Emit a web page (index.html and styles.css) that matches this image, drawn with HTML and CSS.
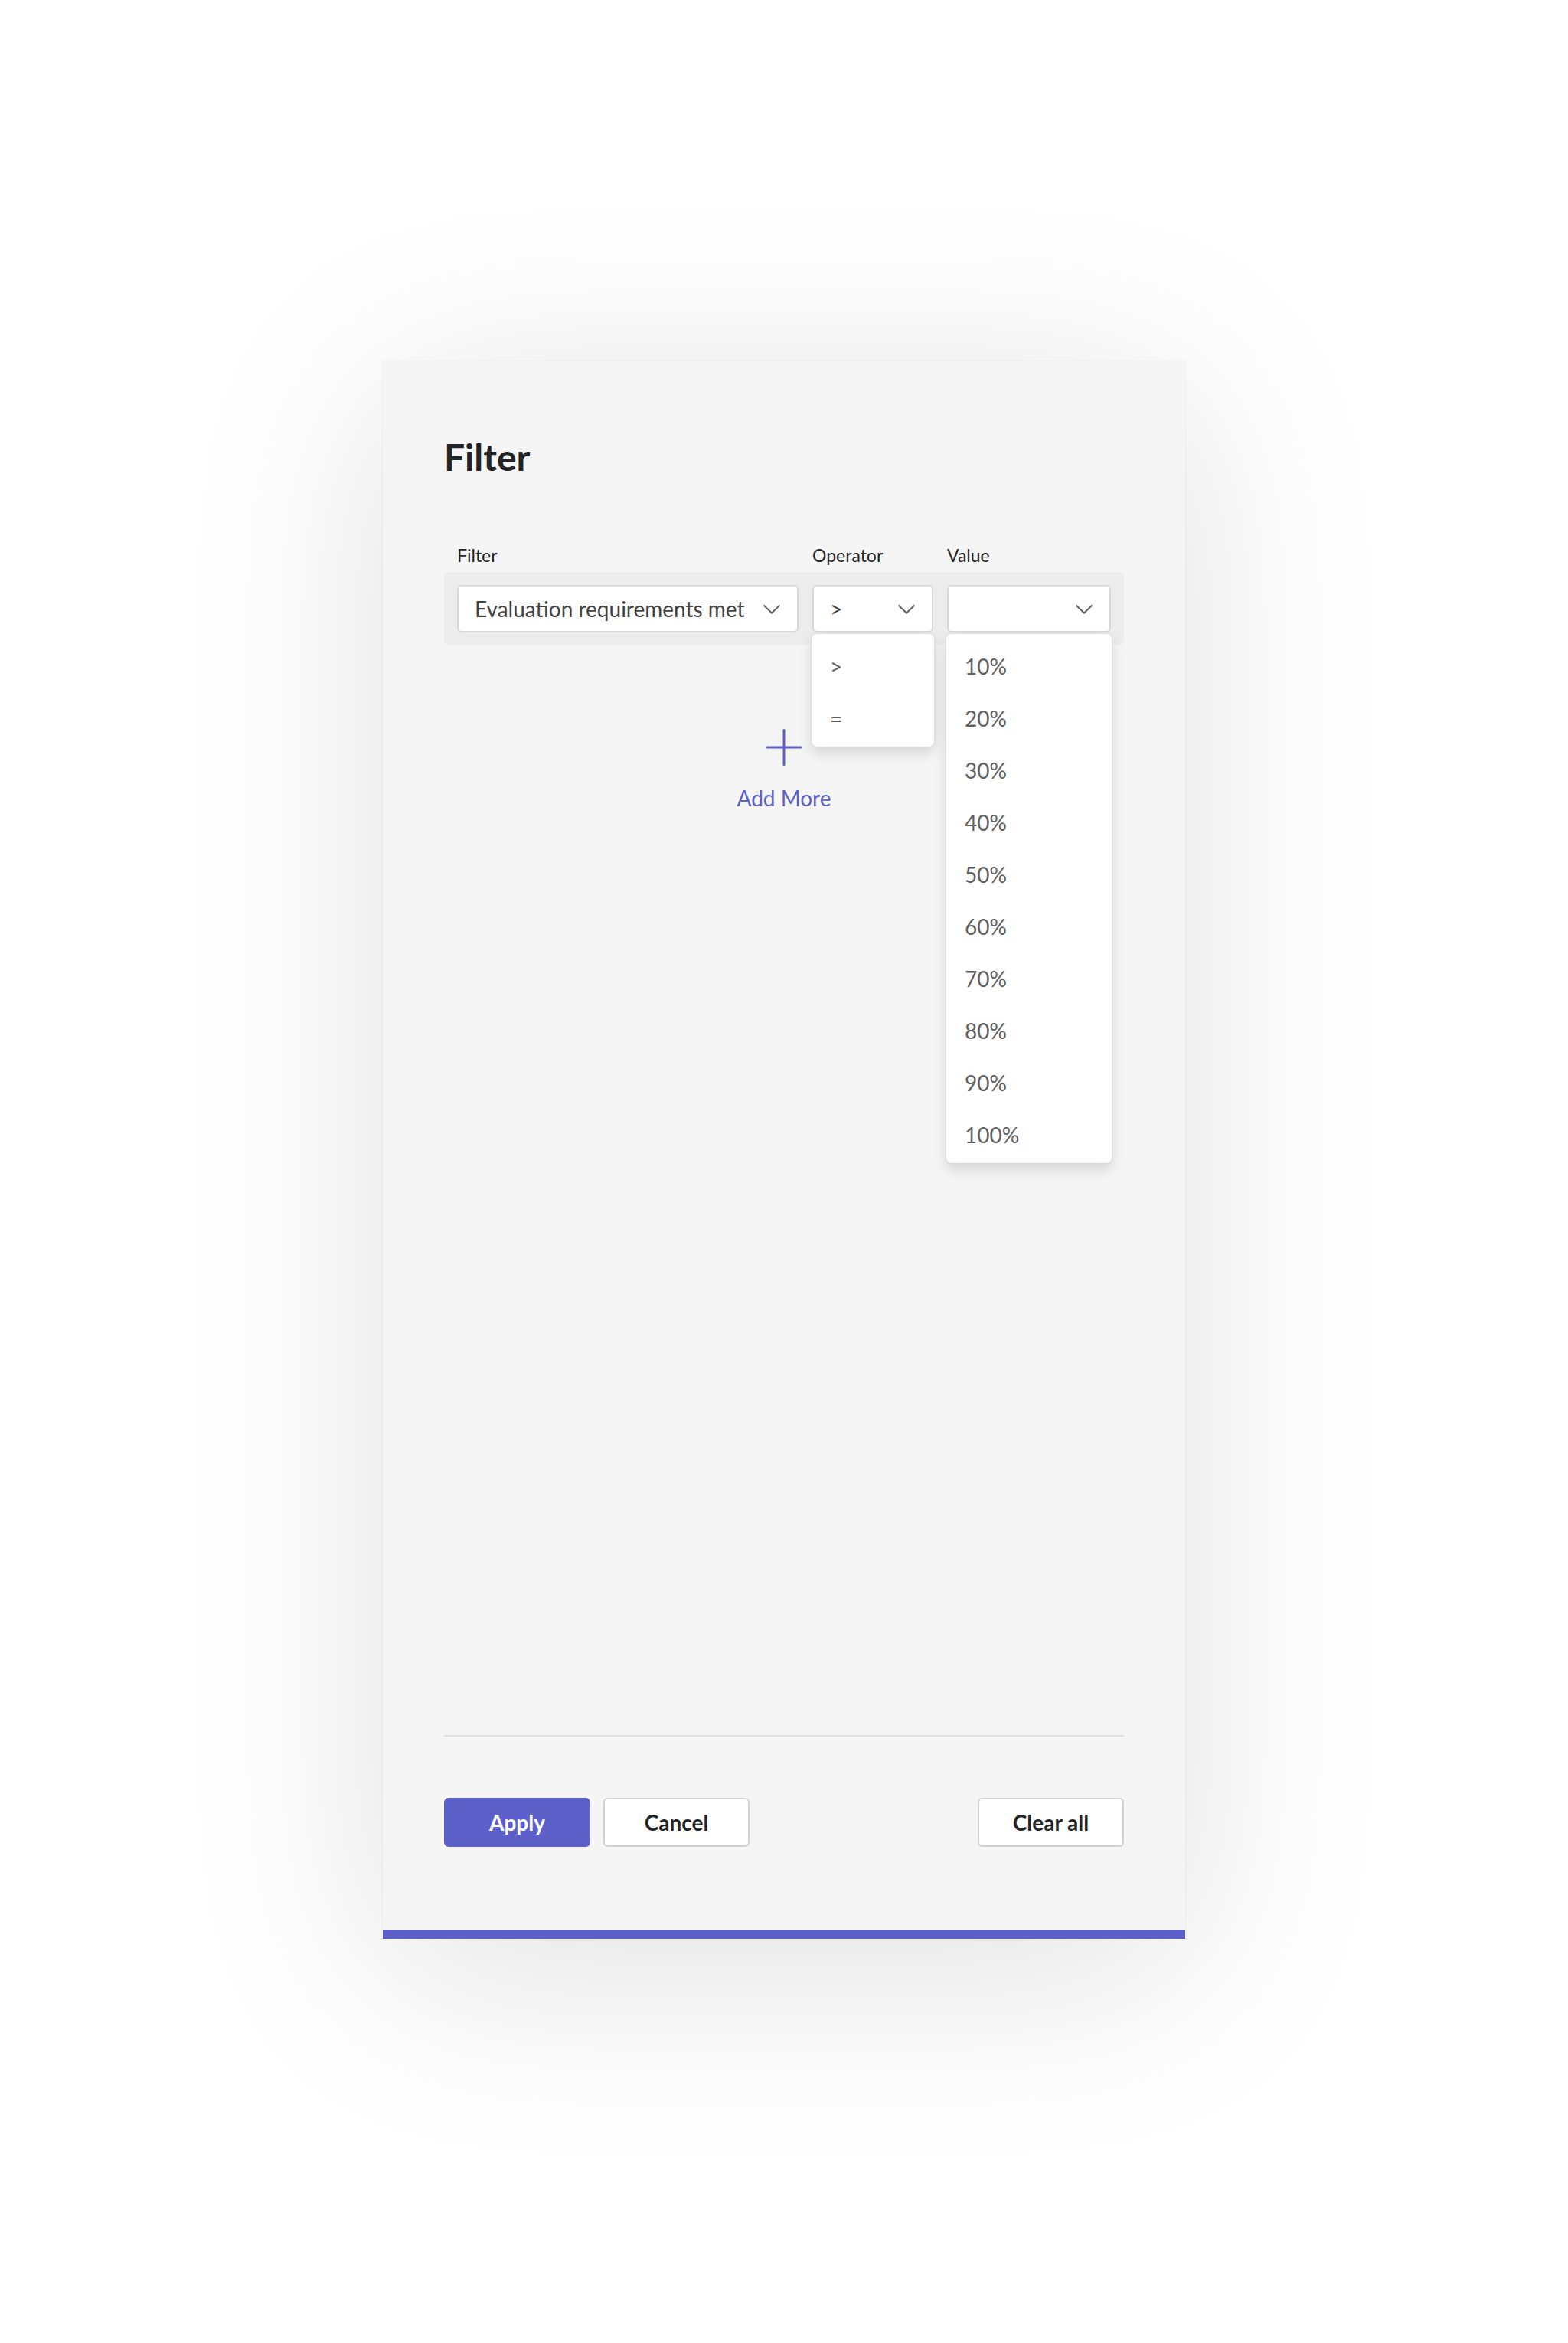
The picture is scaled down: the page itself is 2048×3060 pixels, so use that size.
FILE: index.html
```html
<!DOCTYPE html>
<html lang="en">
<head>
    <meta charset="UTF-8">
    <meta name="viewport" content="width=device-width, initial-scale=1.0">
    <title>Filter</title>
    <link rel="stylesheet" href="styles.css">
</head>
<body>
<div class="stage">
    <div class="panel">
        <h1 class="title">Filter</h1>

        <div class="grid labels">
            <span>Filter</span>
            <span>Operator</span>
            <span>Value</span>
        </div>

        <div class="grid fields">
            <div class="field">
                <div class="select">
                    <span>Evaluation requirements met</span>
                    <svg class="chevron" width="24" height="13" viewBox="0 0 24 13"><path d="M1.5 1.5 L12 11.5 L22.5 1.5"/></svg>
                </div>
            </div>
            <div class="field">
                <div class="select">
                    <span>&gt;</span>
                    <svg class="chevron" width="24" height="13" viewBox="0 0 24 13"><path d="M1.5 1.5 L12 11.5 L22.5 1.5"/></svg>
                </div>
                <ul class="menu">
                    <li>&gt;</li>
                    <li>=</li>
                </ul>
            </div>
            <div class="field">
                <div class="select">
                    <span></span>
                    <svg class="chevron" width="24" height="13" viewBox="0 0 24 13"><path d="M1.5 1.5 L12 11.5 L22.5 1.5"/></svg>
                </div>
                <ul class="menu">
                    <li>10%</li>
                    <li>20%</li>
                    <li>30%</li>
                    <li>40%</li>
                    <li>50%</li>
                    <li>60%</li>
                    <li>70%</li>
                    <li>80%</li>
                    <li>90%</li>
                    <li>100%</li>
                </ul>
            </div>
        </div>

        <div class="add-more">
            <svg width="48" height="48" viewBox="0 0 48 48"><path d="M24 1.5 V46.5 M1.5 24 H46.5"/></svg>
            <span>Add More</span>
        </div>

        <div class="footer">
            <button class="btn primary">Apply</button>
            <button class="btn">Cancel</button>
            <button class="btn clear">Clear all</button>
        </div>
    </div>
</div>
</body>
</html>
```

FILE: styles.css
```css
body {
    margin: 0;
    background: #fff;
    font-family: Lato, "Open Sans", sans-serif;
    color: #242424;
}
.stage {
    padding: 472px 0 0 500px;
    height: 3060px;
    box-sizing: border-box;
}
.panel {
    width: 1048px;
    height: 2060px;
    box-sizing: border-box;
    background: #f5f5f5;
    border-bottom: 12px solid #5b5fc7;
    padding: 95px 80px 108px;
    display: flex;
    flex-direction: column;
    box-shadow: 0 40px 300px rgba(0, 0, 0, 0.12), 0 0 4px rgba(0, 0, 0, 0.06);
}
.title {
    margin: 0;
    font-size: 48px;
    line-height: 60px;
    font-weight: 700;
}

/* columns shared by labels and the select row */
.grid {
    display: grid;
    grid-template-columns: 446px 158px 214px;
    column-gap: 18px;
    padding: 0 17px;
}
.labels {
    margin-top: 84px;
    font-size: 23px;
    line-height: 28px;
    margin-bottom: 8px;
}
.fields {
    background: #ececec;
    border-radius: 6px;
    padding: 17px 17px 16px;
}
.field { position: relative; }
.select {
    height: 62px;
    box-sizing: border-box;
    background: #fff;
    border: 2px solid #dadada;
    border-radius: 6px;
    display: flex;
    align-items: center;
    justify-content: space-between;
    padding: 0 21px 0 21px;
    font-size: 28px;
    color: #424242;
}
.chevron path {
    fill: none;
    stroke: #616161;
    stroke-width: 2;
}
.menu {
    position: absolute;
    top: 64px;
    left: -1px;
    right: -1px;
    margin: 0;
    padding: 8px 0 3px;
    list-style: none;
    background: #fff;
    border-radius: 7px;
    box-shadow: 0 8px 18px rgba(0, 0, 0, 0.14), 0 0 2px rgba(0, 0, 0, 0.12);
    z-index: 2;
}
.menu li {
    height: 68px;
    line-height: 68px;
    padding-left: 24px;
    font-size: 28px;
    color: #616161;
}

.add-more {
    margin-top: 110px;
    display: flex;
    flex-direction: column;
    align-items: center;
    color: #5b5fc7;
    font-size: 28px;
    line-height: 36px;
}
.add-more svg path {
    stroke: #5b5fc7;
    stroke-width: 3;
    stroke-linecap: round;
}
.add-more span { margin-top: 24px; }

.footer {
    margin-top: auto;
    border-top: 2px solid #e0e0e0;
    padding-top: 80px;
    display: flex;
}
.btn {
    width: 191px;
    height: 64px;
    border-radius: 6px;
    border: 2px solid #d1d1d1;
    background: #fff;
    font-family: inherit;
    font-size: 28px;
    font-weight: 700;
    color: #242424;
    margin-right: 17px;
}
.primary {
    background: #5b5fc7;
    border-color: #5b5fc7;
    color: #fff;
}
.clear {
    margin: 0 0 0 auto;
}
```
